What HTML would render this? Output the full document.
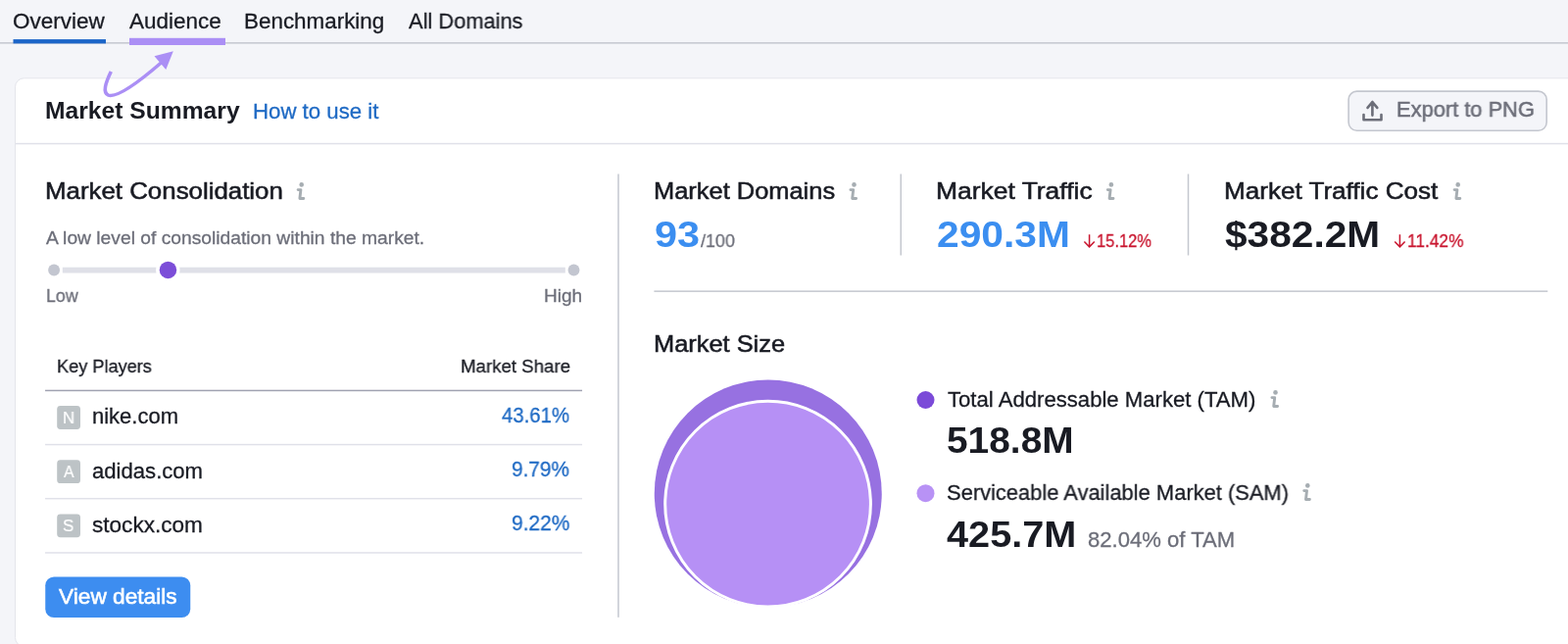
<!DOCTYPE html>
<html lang="en">
<head>
<meta charset="utf-8">
<title>Market Summary</title>
<style>
*{box-sizing:border-box;margin:0;padding:0}
html,body{width:1600px;height:657px;overflow:hidden;background:#f4f5f9}
body{position:relative;font-family:"Liberation Sans",sans-serif;color:#191b23}
.t{position:absolute;white-space:nowrap;line-height:1;transform-origin:0 0;display:block;will-change:transform}
a{text-decoration:none}
h1,h2,p,strong{font-weight:400}
svg{position:absolute;left:0;top:0;overflow:visible;pointer-events:none}
#shapes{z-index:0}
#arrow{z-index:3}
main,nav,header,section{position:static}
.t{z-index:2}
</style>
</head>
<body>
<svg id="shapes" width="1600" height="657" viewBox="0 0 1600 657" aria-hidden="true">
  <defs>
    <g id="info"><circle cx="6.7" cy="3.4" r="2.3" fill="#a6adb2"/><path d="M3.1 8.6 H5.9 L4.9 17.5 H8.8" fill="none" stroke="#a6adb2" stroke-width="2.9" stroke-linecap="round" stroke-linejoin="round"/></g>
    <g id="down"><path d="M7 1.2 V13.6 M1.8 8.4 L7 13.8 L12.2 8.4" fill="none" stroke="#c9162f" stroke-width="1.5"/></g>
  </defs>
  <!-- tab bar -->
  <rect x="0" y="43.1" width="1600" height="1.5" fill="#c4c7cf"/>
  <rect x="13.5" y="40.1" width="94.5" height="4.3" fill="#1c65c8"/>
  <rect x="132" y="38.8" width="98" height="7.2" fill="#ab8ff5"/>
  <!-- card -->
  <rect x="15.5" y="79.8" width="1600" height="579.7" rx="9" fill="#fff" stroke="#e4e5eb" stroke-width="1"/>
  <rect x="16" y="145.83" width="1584" height="1.5" fill="#e0e1e9"/>
  <!-- export button -->
  <rect x="1376.1" y="93.1" width="202.1" height="40.1" rx="8.4" fill="#f4f5f9" stroke="#c4c7cf" stroke-width="1.6"/>
  <path d="M1400.4 117.6 V104.1 M1395.5 109.9 L1400.4 104.1 L1405.3 109.9 M1391.5 117.1 V122.2 H1409.5 V117.1" fill="none" stroke="#6c6e79" stroke-width="2.6" stroke-linecap="round" stroke-linejoin="round"/>
  <!-- slider -->
  <rect x="63.8" y="272.7" width="513" height="5.8" fill="#dfe0e8"/>
  <circle cx="55.1" cy="275.5" r="5.95" fill="#c3c6d0"/>
  <circle cx="585.5" cy="275.5" r="5.9" fill="#c3c6d0"/>
  <circle cx="171.3" cy="275.4" r="12.2" fill="#fff"/>
  <circle cx="171.45" cy="275.4" r="8.75" fill="#7c4ed8"/>
  <!-- table rules -->
  <rect x="46.05" y="397.69" width="548" height="1.5" fill="#a0a2b1"/>
  <rect x="46.05" y="452.83" width="548" height="1.5" fill="#e0e1e9"/>
  <rect x="46.05" y="507.92" width="548" height="1.5" fill="#e0e1e9"/>
  <rect x="46.05" y="563.19" width="548" height="1.5" fill="#e0e1e9"/>
  <!-- favicons -->
  <rect x="58.2" y="414.1" width="23.8" height="23.8" rx="3.4" fill="#bdc3c6"/>
  <rect x="58.2" y="469.3" width="23.8" height="23.8" rx="3.4" fill="#bdc3c6"/>
  <rect x="58.2" y="524.4" width="23.8" height="23.8" rx="3.4" fill="#bdc3c6"/>
  <!-- view details button -->
  <rect x="46.25" y="588.5" width="148" height="41.5" rx="8.8" fill="#3d8df0"/>
  <!-- dividers -->
  <rect x="630.25" y="177.5" width="1.5" height="452.3" fill="#c4c7cf"/>
  <rect x="918.5" y="177.5" width="1.5" height="83" fill="#c4c7cf"/>
  <rect x="1211.75" y="177.5" width="1.5" height="83" fill="#c4c7cf"/>
  <rect x="667.4" y="296.4" width="911.9" height="1.5" fill="#c4c7cf"/>
  <!-- info icons -->
  <use href="#info" x="301" y="185"/>
  <use href="#info" x="864.8" y="185"/>
  <use href="#info" x="1127.2" y="185"/>
  <use href="#info" x="1481" y="185"/>
  <use href="#info" x="1294.8" y="397"/>
  <use href="#info" x="1327.6" y="492"/>
  <!-- trend arrows -->
  <use href="#down" x="1104.6" y="238"/>
  <use href="#down" x="1421.4" y="238"/>
  <!-- market size chart -->
  <circle cx="783.75" cy="503.5" r="116" fill="#9771e1"/>
  <circle cx="783.55" cy="514.15" r="104.85" fill="#b690f5" stroke="#fff" stroke-width="3"/>
  <circle cx="944.5" cy="408" r="9" fill="#7b4ad8"/>
  <circle cx="944.5" cy="503.2" r="9" fill="#b892f5"/>
</svg>
<svg id="arrow" width="1600" height="657" viewBox="0 0 1600 657" aria-hidden="true">
  <path d="M113.3 73 C108 84 104.2 94.6 110.6 97.1 C119.5 100 141 84.3 165 63.5" fill="none" stroke="#ab8ff5" stroke-width="3.6"/>
  <path d="M176.8 52.3 L157.5 57.3 L169.3 71 Z" fill="#ab8ff5"/>
</svg>
<nav>
  <a class="t" id="tab1" style="left:13.18px;top:10.57px;font-size:22.00px;-webkit-text-stroke:0.3px;color:#191b23;transform:scaleX(1.0210)">Overview</a>
  <a class="t" id="tab2" style="left:131.94px;top:10.57px;font-size:22.00px;-webkit-text-stroke:0.3px;color:#191b23;transform:scaleX(1.0216)">Audience</a>
  <a class="t" id="tab3" style="left:249.41px;top:10.57px;font-size:22.00px;-webkit-text-stroke:0.3px;color:#191b23;transform:scaleX(1.0189)">Benchmarking</a>
  <a class="t" id="tab4" style="left:416.97px;top:10.57px;font-size:22.00px;-webkit-text-stroke:0.3px;color:#191b23;transform:scaleX(0.9928)">All Domains</a>
</nav>
<main>
<header>
  <h1 class="t" id="title" style="left:45.95px;top:100.51px;font-size:24.50px;font-weight:700;color:#191b23;transform:scaleX(1.0058)">Market Summary</h1>
  <a class="t" id="how" style="left:258.29px;top:102.62px;font-size:22.00px;-webkit-text-stroke:0.3px;color:#1f6ac4;transform:scaleX(1.0099)">How to use it</a>
  <span class="t" id="exp" style="left:1424.58px;top:100.97px;font-size:22.00px;-webkit-text-stroke:0.55px;color:#6c6e79;transform:scaleX(0.9931)">Export to PNG</span>
</header>
<section>
  <h2 class="t" id="mc" style="left:45.96px;top:183.26px;font-size:24.50px;-webkit-text-stroke:0.55px;color:#191b23;transform:scaleX(1.0553)">Market Consolidation</h2>
  <p class="t" id="desc" style="left:46.52px;top:232.51px;font-size:19.00px;-webkit-text-stroke:0.3px;color:#6c6e79;transform:scaleX(1.0129)">A low level of consolidation within the market.</p>
  <span class="t" id="low" style="left:46.87px;top:292.21px;font-size:19.00px;-webkit-text-stroke:0.3px;color:#6c6e79;transform:scaleX(0.9346)">Low</span>
  <span class="t" id="high" style="left:555.38px;top:292.21px;font-size:19.00px;-webkit-text-stroke:0.3px;color:#6c6e79;transform:scaleX(0.9890)">High</span>
  <span class="t" id="kp" style="left:58.43px;top:363.61px;font-size:19.00px;-webkit-text-stroke:0.3px;color:#191b23;transform:scaleX(0.9556)">Key Players</span>
  <span class="t" id="ms" style="left:470.02px;top:363.61px;font-size:19.00px;-webkit-text-stroke:0.3px;color:#191b23;transform:scaleX(0.9824)">Market Share</span>
  <span class="t" id="fN" style="left:63.59px;top:418.27px;font-size:17.40px;-webkit-text-stroke:0.2px;color:#ffffff;transform:scaleX(0.9606)">N</span><span class="t" id="d1" style="left:94.10px;top:413.87px;font-size:22.00px;-webkit-text-stroke:0.3px;color:#191b23;transform:scaleX(0.9976)">nike.com</span><span class="t" id="p1" style="left:512.31px;top:413.27px;font-size:22.00px;-webkit-text-stroke:0.3px;color:#1f6ac4;transform:scaleX(0.9258)">43.61%</span>
  <span class="t" id="fA" style="left:64.76px;top:473.47px;font-size:17.40px;-webkit-text-stroke:0.2px;color:#ffffff;transform:scaleX(0.9119)">A</span><span class="t" id="d2" style="left:93.94px;top:470.07px;font-size:22.00px;-webkit-text-stroke:0.3px;color:#191b23;transform:scaleX(1.0047)">adidas.com</span><span class="t" id="p2" style="left:522.06px;top:467.57px;font-size:22.00px;-webkit-text-stroke:0.3px;color:#1f6ac4;transform:scaleX(0.9451)">9.79%</span>
  <span class="t" id="fS" style="left:64.24px;top:527.57px;font-size:17.40px;-webkit-text-stroke:0.2px;color:#ffffff;transform:scaleX(0.9657)">S</span><span class="t" id="d3" style="left:93.87px;top:525.37px;font-size:22.00px;-webkit-text-stroke:0.3px;color:#191b23;transform:scaleX(1.0260)">stockx.com</span><span class="t" id="p3" style="left:521.65px;top:522.77px;font-size:22.00px;-webkit-text-stroke:0.3px;color:#1f6ac4;transform:scaleX(0.9537)">9.22%</span>
  <span class="t" id="vd" style="left:59.83px;top:598.17px;font-size:22.00px;-webkit-text-stroke:0.55px;color:#ffffff;transform:scaleX(1.0313)">View details</span>
</section>
<section>
  <h2 class="t" id="md" style="left:666.86px;top:183.26px;font-size:24.50px;-webkit-text-stroke:0.55px;color:#191b23;transform:scaleX(1.0380)">Market Domains</h2>
  <strong class="t" id="n93" style="left:668.49px;top:221.07px;font-size:37.00px;font-weight:700;color:#3b8ef0;transform:scaleX(1.1195)">93</strong><span class="t" id="n100" style="left:715.11px;top:236.31px;font-size:19.00px;-webkit-text-stroke:0.3px;color:#6c6e79;transform:scaleX(0.9437)">/100</span>
  <h2 class="t" id="mt" style="left:955.10px;top:183.26px;font-size:24.50px;-webkit-text-stroke:0.55px;color:#191b23;transform:scaleX(1.0789)">Market Traffic</h2>
  <strong class="t" id="n290" style="left:955.93px;top:221.07px;font-size:37.00px;font-weight:700;color:#3b8ef0;transform:scaleX(1.1018)">290.3M</strong><span class="t" id="r1" style="left:1119.10px;top:236.31px;font-size:19.00px;-webkit-text-stroke:0.3px;color:#c9162f;transform:scaleX(0.8680)">15.12%</span>
  <h2 class="t" id="mtc" style="left:1248.87px;top:183.26px;font-size:24.50px;-webkit-text-stroke:0.55px;color:#191b23;transform:scaleX(1.0641)">Market Traffic Cost</h2>
  <strong class="t" id="n382" style="left:1249.75px;top:221.07px;font-size:37.00px;font-weight:700;color:#191b23;transform:scaleX(1.0990)">$382.2M</strong><span class="t" id="r2" style="left:1436.06px;top:236.31px;font-size:19.00px;-webkit-text-stroke:0.3px;color:#c9162f;transform:scaleX(0.9104)">11.42%</span>
</section>
<section>
  <h2 class="t" id="msz" style="left:667.46px;top:338.96px;font-size:24.50px;-webkit-text-stroke:0.55px;color:#191b23;transform:scaleX(1.0367)">Market Size</h2>
  <span class="t" id="tam" style="left:967.30px;top:397.07px;font-size:22.00px;-webkit-text-stroke:0.3px;color:#191b23;transform:scaleX(1.0058)">Total Addressable Market (TAM)</span>
  <strong class="t" id="n518" style="left:965.63px;top:430.67px;font-size:37.00px;font-weight:700;color:#191b23;transform:scaleX(1.0502)">518.8M</strong>
  <span class="t" id="sam" style="left:965.64px;top:492.27px;font-size:22.00px;-webkit-text-stroke:0.3px;color:#191b23;transform:scaleX(0.9955)">Serviceable Available Market (SAM)</span>
  <strong class="t" id="n425" style="left:966.33px;top:527.37px;font-size:37.00px;font-weight:700;color:#191b23;transform:scaleX(1.0725)">425.7M</strong><span class="t" id="pct" style="left:1110.26px;top:540.17px;font-size:22.00px;-webkit-text-stroke:0.3px;color:#6c6e79;transform:scaleX(1.0034)">82.04% of TAM</span>
</section>
</main>
</body>
</html>
